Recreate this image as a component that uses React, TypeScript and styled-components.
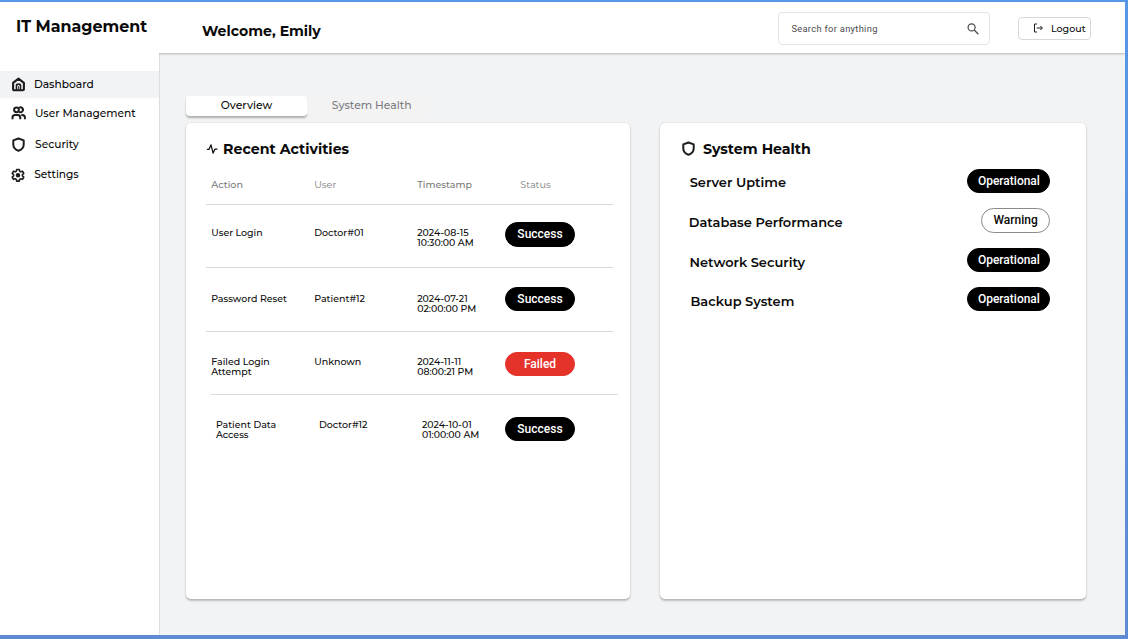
import React from "react";
import styled, { createGlobalStyle } from "styled-components";

const GlobalStyle = createGlobalStyle`
  * { box-sizing: border-box; }
  body { margin: 0; background: #ffffff; }
`;

const brandFont = `Montserrat, Inter, "Liberation Sans", sans-serif`;
const uiFont = `Roboto, "Liberation Sans", sans-serif`;

const Frame = styled.div`
  width: 1128px;
  height: 639px;
  padding: 2px 3px 4px 0;
  background: linear-gradient(to bottom, #5797e6 0%, #5a8fdb 45%, #5f8ad4 100%);
  font-family: ${brandFont};
  color: #0a0a0a;
`;

const Shell = styled.div`
  display: flex;
  height: 100%;
  background: #ffffff;
`;

const Label = styled.span<{ $size: number; $weight?: number; $track?: number; $color?: string }>`
  font-size: ${(p) => p.$size}px;
  font-weight: ${(p) => p.$weight ?? 500};
  letter-spacing: ${(p) => p.$track ?? 0}px;
  color: ${(p) => p.$color ?? "inherit"};
  white-space: nowrap;
`;

const Sidebar = styled.aside`
  width: 159px;
  flex: none;
  padding-top: 15px;
`;

const Brand = styled.div`
  display: flex;
  height: 20px;
  line-height: 20px;
  padding-left: 16px;
  margin-bottom: 34px;
`;

const NavItem = styled.a<{ $height: number; $active?: boolean; $gap: number }>`
  display: flex;
  align-items: center;
  height: ${(p) => p.$height}px;
  padding-left: 11px;
  gap: ${(p) => p.$gap}px;
  line-height: 14px;
  background: ${(p) => (p.$active ? "#f2f3f5" : "transparent")};
  svg { flex: none; }
  span { padding-top: 1.4px; }
`;

const Main = styled.main`
  flex: 1;
  display: flex;
  flex-direction: column;
`;

const Header = styled.header`
  position: relative;
  display: flex;
  align-items: flex-start;
  height: 51px;
  padding: 10px 34px 0 43px;
  background: #ffffff;
  box-shadow: 0 1px 2px rgba(0, 0, 0, 0.26);
  clip-path: inset(0 0 -6px 0);
`;

const Greeting = styled.h1`
  margin: 9px auto 0 0;
  line-height: 20px;
  display: flex;
`;

const SearchBox = styled.div`
  display: flex;
  align-items: center;
  justify-content: space-between;
  width: 212px;
  height: 33px;
  padding: 0 10px 0 12.4px;
  border: 1px solid #e3e4e6;
  border-radius: 4px;
  font-family: ${uiFont};
`;

const LogoutButton = styled.button`
  display: flex;
  align-items: center;
  gap: 7px;
  width: 73px;
  height: 23px;
  margin: 4.5px 0 0 28px;
  padding: 0 0 0 14px;
  border: 1px solid #d8d8da;
  border-radius: 4px;
  background: #ffffff;
  color: #0a0a0a;
  font-family: ${brandFont};
  line-height: 14px;
  span { padding-top: 1px; }
`;

const Content = styled.section`
  flex: 1;
  padding: 43px 0 0 26px;
  border-left: 1px solid #dddee0;
  background: #f2f3f5;
`;

const Tabs = styled.div`
  display: flex;
  height: 20px;
  margin-bottom: 7px;
`;

const Tab = styled.div<{ $active?: boolean }>`
  display: flex;
  align-items: center;
  justify-content: ${(p) => (p.$active ? "center" : "flex-start")};
  width: ${(p) => (p.$active ? 121 : 123)}px;
  padding-left: ${(p) => (p.$active ? 0 : 24.8)}px;
  border-radius: 4px;
  background: ${(p) => (p.$active ? "#ffffff" : "#f3f3f4")};
  box-shadow: ${(p) => (p.$active ? "0 2px 2px rgba(0, 0, 0, 0.28)" : "none")};
  line-height: 14px;
`;

const Panels = styled.div`
  display: flex;
  gap: 30px;
`;

const Panel = styled.div<{ $width: number; $left: number; $right: number }>`
  width: ${(p) => p.$width}px;
  height: 475.5px;
  padding: 15px ${(p) => p.$right}px 0 ${(p) => p.$left}px;
  border-radius: 5px;
  background: #ffffff;
  box-shadow: 0 2px 2px rgba(0, 0, 0, 0.22), 0 0 2px rgba(0, 0, 0, 0.14);
`;

const PanelTitle = styled.h2<{ $gap: number }>`
  display: flex;
  align-items: center;
  gap: ${(p) => p.$gap}px;
  height: 21px;
  margin: 0;
  line-height: 20px;
`;

const HeadRow = styled.div`
  display: grid;
  grid-template-columns: 103px 103px 103px auto;
  height: 45px;
  padding: 20px 0 0 4.9px;
  line-height: 12px;
`;

const Row = styled.div<{ $height: number; $shift?: number }>`
  display: grid;
  grid-template-columns: 103px 103px ${(p) => 87.8 - (p.$shift ?? 0)}px 70px;
  align-items: start;
  width: 407.2px;
  height: ${(p) => p.$height}px;
  margin-left: ${(p) => p.$shift ?? 0}px;
  padding-left: 4.9px;
  border-top: 1px solid ${(p) => (p.$shift ? "#dfd9db" : "#d6d6d6")};
`;

const Cell = styled.div<{ $top: number }>`
  display: flex;
  flex-direction: column;
  padding-top: ${(p) => p.$top}px;
  line-height: 9.4px;
`;

type Tone = "ok" | "bad" | "warn";
const toneFill: Record<Tone, string> = { ok: "#000000", bad: "#e63329", warn: "#ffffff" };

const Badge = styled.span<{ $tone: Tone; $width: number; $top?: number }>`
  display: flex;
  align-items: center;
  justify-content: center;
  width: ${(p) => p.$width}px;
  height: 24.3px;
  margin-top: ${(p) => p.$top ?? 0}px;
  border: 1px solid ${(p) => (p.$tone === "warn" ? "#8b8b8b" : toneFill[p.$tone])};
  border-radius: 13px;
  background: ${(p) => toneFill[p.$tone]};
  color: ${(p) => (p.$tone === "warn" ? "#0a0a0a" : "#ffffff")};
  font: 500 12px/14px ${uiFont};
`;

const HealthList = styled.div`
  padding: 2.5px 0 0 7.4px;
`;

const HealthRow = styled.div`
  display: flex;
  align-items: center;
  justify-content: space-between;
  height: 39.3px;
  line-height: 16px;
`;

const HealthName = styled.div<{ $dx: number; $dy: number }>`
  padding: ${(p) => p.$dy}px 0 0 ${(p) => p.$dx}px;
`;

const HomeIcon = () => (
  <svg width="15" height="15" viewBox="0 0 15 15" fill="none" stroke="#1d1d1f" strokeWidth="2.1" strokeLinejoin="round">
    <path d="M2.1 5.9 7.5 1.7l5.4 4.2v6.3q0 1-1 1H3.1q-1 0-1-1z" />
    <path d="M5.5 13V8.7q0-1.6 2-1.6t2 1.6V13" strokeWidth="1.6" />
    <path d="M7.5 9.2V13" strokeWidth="0.8" />
  </svg>
);

const UsersIcon = () => (
  <svg width="15" height="14" viewBox="0 0 15 14" fill="none" stroke="#1d1d1f" strokeWidth="2">
    <circle cx="5.5" cy="3.8" r="2.4" />
    <path d="M8.2 1.8a2.4 2.4 0 1 1 0 4" />
    <path d="M1.5 13.2v-1.6q0-2.5 2.5-2.5h2.8q2.5 0 2.5 2.5v1.6" />
    <path d="M10.3 8.9h1q2.6 0 2.6 2.5v1.8" />
  </svg>
);

const ShieldIcon = ({ width = 15 }: { width?: number }) => (
  <svg width={width} height="15" viewBox="0 0 15 15" fill="none" stroke="#1d1d1f" strokeWidth="2" strokeLinejoin="round">
    <path d="M7.5 1.5 12.7 3.4v4c0 3.1-2 5.1-5.2 6.3-3.2-1.2-5.2-3.2-5.2-6.3v-4z" />
  </svg>
);

const GearIcon = () => (
  <svg width="14" height="14" viewBox="0 0 24 24" fill="none" stroke="#1d1d1f" strokeWidth="2.8" strokeLinejoin="round">
    <path d="M9.8 2.5h4.4l.6 3 2 1.1 2.9-1 2.2 3.8-2.3 2v2.2l2.3 2-2.2 3.8-2.9-1-2 1.1-.6 3H9.8l-.6-3-2-1.1-2.9 1-2.2-3.8 2.3-2v-2.2l-2.3-2 2.2-3.8 2.9 1 2-1.1z" />
    <circle cx="12" cy="12.3" r="2.5" fill="#1d1d1f" />
  </svg>
);

const SearchIcon = () => (
  <svg width="12" height="12" viewBox="0 0 12 12" fill="none" stroke="#4a4a4e" strokeWidth="1.25">
    <circle cx="4.6" cy="4.4" r="3.5" />
    <path d="M7.2 7 11.4 11.2" />
  </svg>
);

const LogoutIcon = () => (
  <svg width="11" height="10" viewBox="0 0 11 10" fill="none" stroke="#1d1d1f" strokeWidth="1">
    <path d="M4 1H1.5v8H4M3.8 5h5.4M7.3 2.9 9.4 5 7.3 7.1" />
  </svg>
);

const PulseIcon = () => (
  <svg width="12" height="12" viewBox="0 0 12 12" fill="none" stroke="#111111" strokeWidth="1.25" strokeLinejoin="round">
    <path d="M.9 6.3h2.2L5 1.8 7.1 10.2 8.9 6h2.6" />
  </svg>
);

interface Activity {
  height: number;
  shift?: number;
  textTop: number;
  badgeTop: number;
  action: string[];
  user: string;
  time: string[];
  status: string;
  tone: Tone;
}

const activities: Activity[] = [
  { height: 63, textTop: 23.3, badgeTop: 17.3, action: ["User Login"], user: "Doctor#01", time: ["2024-08-15", "10:30:00 AM"], status: "Success", tone: "ok" },
  { height: 64, textTop: 26.3, badgeTop: 19, action: ["Password Reset"], user: "Patient#12", time: ["2024-07-21", "02:00:00 PM"], status: "Success", tone: "ok" },
  { height: 63, textTop: 25.2, badgeTop: 20, action: ["Failed Login", "Attempt"], user: "Unknown", time: ["2024-11-11", "08:00:21 PM"], status: "Failed", tone: "bad" },
  { height: 64, shift: 4.7, textTop: 25.3, badgeTop: 22, action: ["Patient Data", "Access"], user: "Doctor#12", time: ["2024-10-01", "01:00:00 AM"], status: "Success", tone: "ok" },
];

const services: { name: string; dx: number; dy: number; status: string; tone: Tone }[] = [
  { name: "Server Uptime", dx: 1, dy: 2.4, status: "Operational", tone: "ok" },
  { name: "Database Performance", dx: 0, dy: 3.4, status: "Warning", tone: "warn" },
  { name: "Network Security", dx: 0.8, dy: 4.5, status: "Operational", tone: "ok" },
  { name: "Backup System", dx: 1.8, dy: 4.6, status: "Operational", tone: "ok" },
];

const muted = "#7b7b7d";

export default function App() {
  return (
    <>
      <GlobalStyle />
      <Frame>
        <Shell>
          <Sidebar>
            <Brand><Label $size={15.9} $weight={700}>IT Management</Label></Brand>
            <NavItem $height={26.5} $gap={7.9} $active><HomeIcon /><Label $size={10.7}>Dashboard</Label></NavItem>
            <NavItem $height={31.5} $gap={8.9}><UsersIcon /><Label $size={10.65}>User Management</Label></NavItem>
            <NavItem $height={30} $gap={9.1}><ShieldIcon /><Label $size={10.65}>Security</Label></NavItem>
            <NavItem $height={31} $gap={9.2}><GearIcon /><Label $size={10.6}>Settings</Label></NavItem>
          </Sidebar>
          <Main>
            <Header>
              <Greeting><Label $size={14.1} $weight={700}>Welcome, Emily</Label></Greeting>
              <SearchBox>
                <Label $size={9.3} $weight={400} $track={0.32} $color="#4a4a4e">Search for anything</Label>
                <SearchIcon />
              </SearchBox>
              <LogoutButton><LogoutIcon /><Label $size={9.5}>Logout</Label></LogoutButton>
            </Header>
            <Content>
              <Tabs>
                <Tab $active><Label $size={10.8} $weight={550}>Overview</Label></Tab>
                <Tab><Label $size={10.8} $color="#7d7d80">System Health</Label></Tab>
              </Tabs>
              <Panels>
                <Panel $width={444} $left={20.3} $right={10}>
                  <PanelTitle $gap={4.8}><PulseIcon /><Label $size={14.2} $weight={700}>Recent Activities</Label></PanelTitle>
                  <HeadRow>
                    <Label $size={9.6} $color={muted}>Action</Label>
                    <Label $size={9.7} $weight={450} $color={muted}>User</Label>
                    <Label $size={9.5} $weight={550} $color={muted}>Timestamp</Label>
                    <Label $size={9.7} $weight={400} $color={muted}>Status</Label>
                  </HeadRow>
                  {activities.map((a) => (
                    <Row key={a.user} $height={a.height} $shift={a.shift}>
                      <Cell $top={a.textTop}>
                        {a.action.map((t) => <Label key={t} $size={9.45}>{t}</Label>)}
                      </Cell>
                      <Cell $top={a.textTop}><Label $size={9.5}>{a.user}</Label></Cell>
                      <Cell $top={a.textTop}>
                        {a.time.map((t) => <Label key={t} $size={9.4}>{t}</Label>)}
                      </Cell>
                      <Badge $tone={a.tone} $width={70} $top={a.badgeTop}>{a.status}</Badge>
                    </Row>
                  ))}
                </Panel>
                <Panel $width={426} $left={21.3} $right={35.6}>
                  <PanelTitle $gap={6.6}><ShieldIcon /><Label $size={14.2} $weight={700}>System Health</Label></PanelTitle>
                  <HealthList>
                    {services.map((s) => (
                      <HealthRow key={s.name}>
                        <HealthName $dx={s.dx} $dy={s.dy}><Label $size={12.97} $weight={600}>{s.name}</Label></HealthName>
                        <Badge $tone={s.tone} $width={s.tone === "warn" ? 69.5 : 83}>{s.status}</Badge>
                      </HealthRow>
                    ))}
                  </HealthList>
                </Panel>
              </Panels>
            </Content>
          </Main>
        </Shell>
      </Frame>
    </>
  );
}
